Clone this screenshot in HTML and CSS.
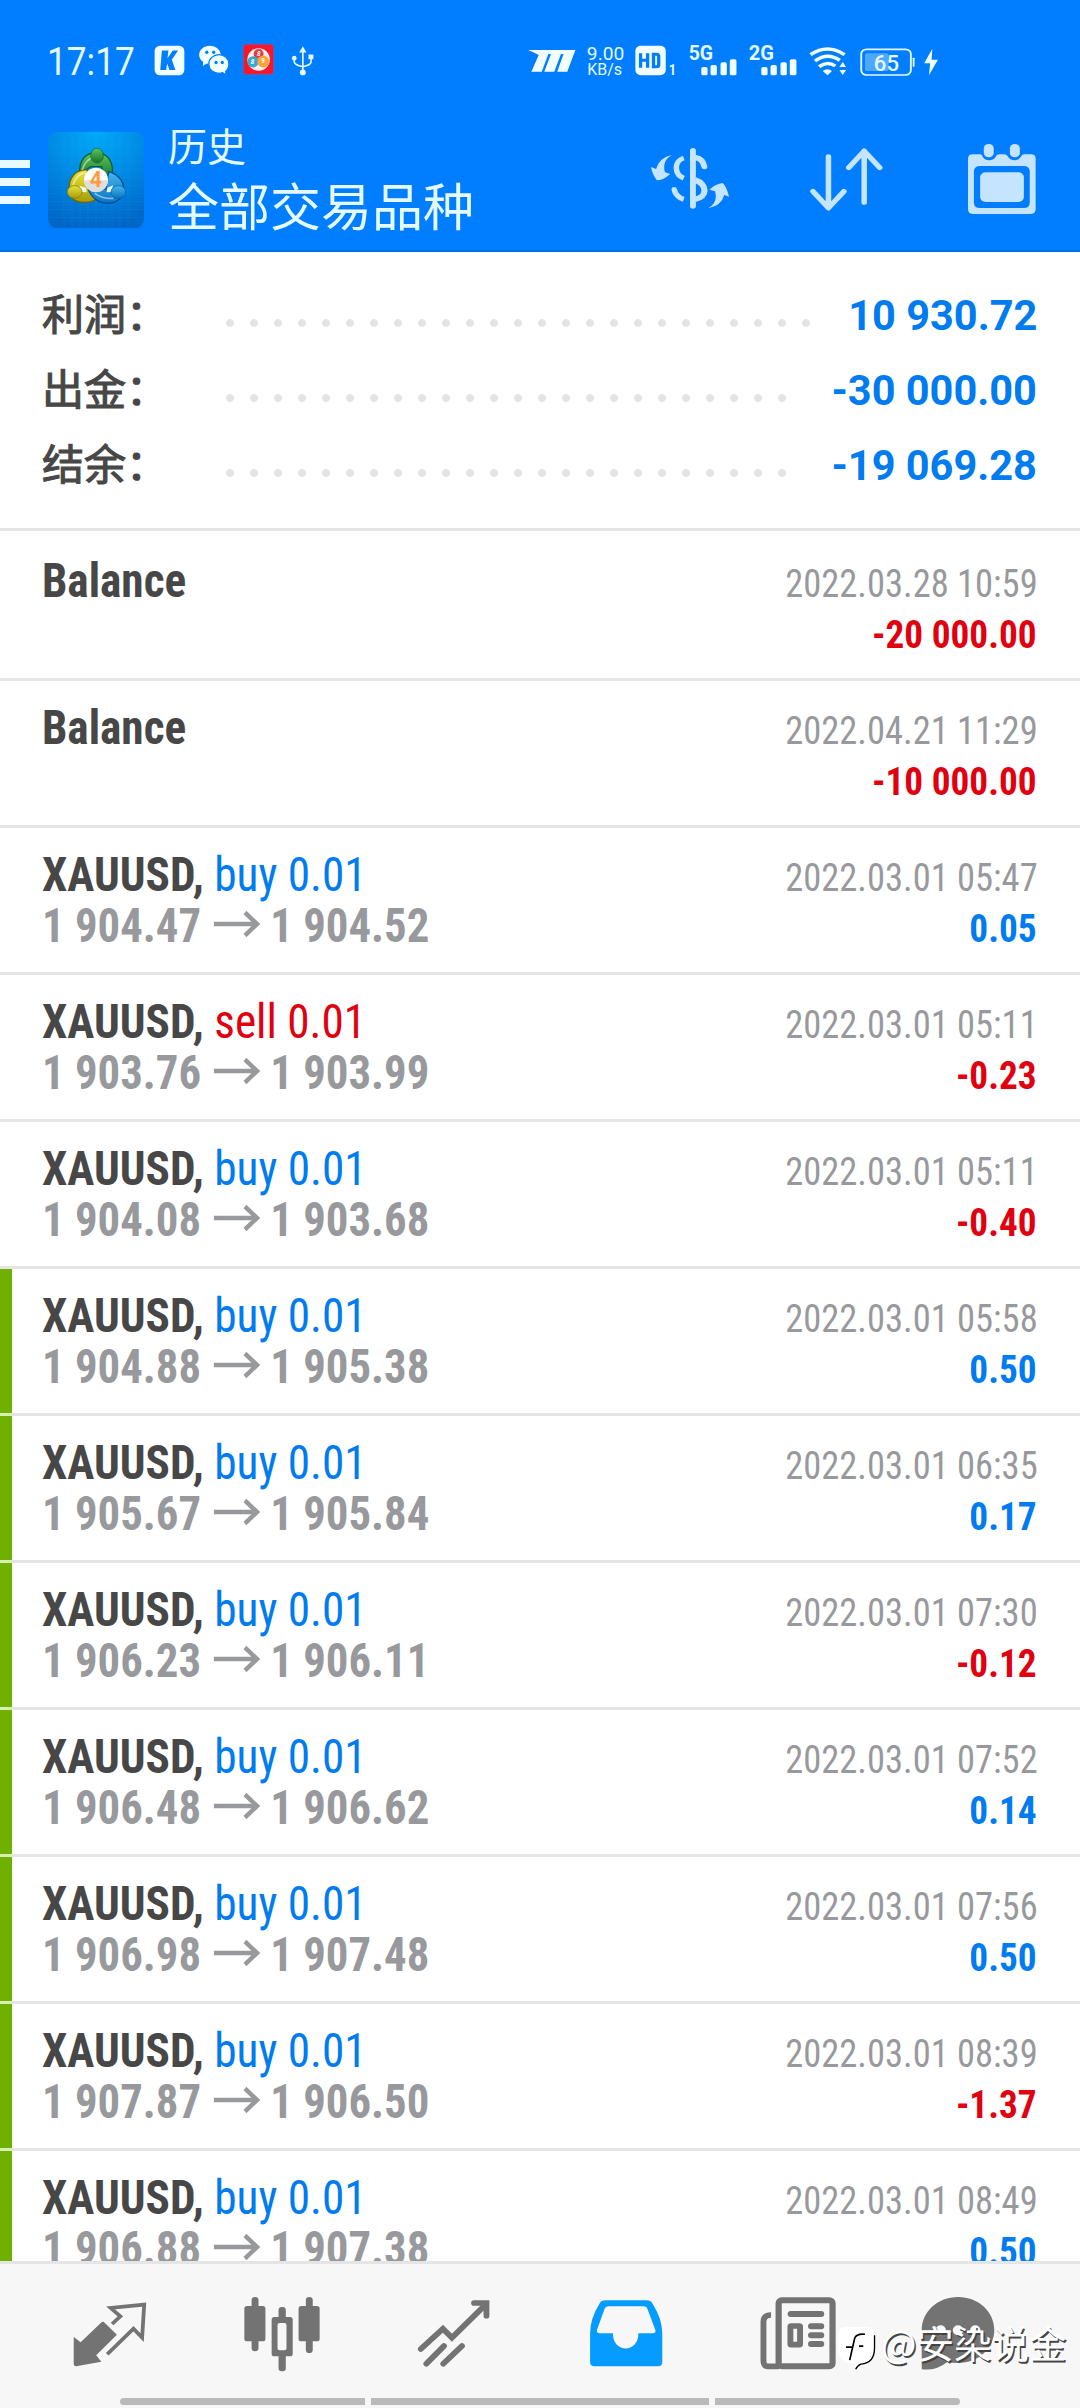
FILE: index.html
```html
<!DOCTYPE html>
<html lang="zh-CN">
<head>
<meta charset="utf-8">
<title>历史</title>
<link rel="stylesheet" href="styles.css">
</head>
<body>
<header class="header">
  <div class="status">
    <span class="clock">17:17</span>
    <svg class="status-left" viewBox="42 25 490 103">
      <!-- K app -->
      <rect x="42" y="33" width="90" height="90" rx="16" fill="#f2ffff"/>
      <path d="M64 48H84L81 71L97 48H113L94 76L105 107H87L80 87L77 107H59Z" fill="#007eff"/>
      <!-- chat bubbles -->
      <path d="M209 33c-18 0-32 12-32 28 0 9 5 16 12 21l-1 13 12-8c3 1 6 1 9 1 18 0 33-12 33-27 0-16-15-28-33-28z" fill="#f2ffff"/>
      <path d="M237 60c-17 0-31 13-31 29s14 28 31 28c4 0 8-1 11-2l11 8-2-12c6-5 10-13 10-22 0-16-13-29-30-29z" fill="#f2ffff" stroke="#007eff" stroke-width="4"/>
      <g fill="#007eff"><circle cx="200" cy="53" r="5"/><circle cx="221" cy="53" r="5"/><circle cx="228" cy="84" r="5"/><circle cx="247" cy="84" r="5"/></g>
      <!-- lottery balls -->
      <rect x="311" y="29" width="91" height="91" rx="9" fill="#f5182b" stroke="#8655a4" stroke-width="2"/>
      <circle cx="357" cy="75" r="34" fill="#fff2ee"/>
      <circle cx="357" cy="58" r="15" fill="#e73a42"/>
      <circle cx="340" cy="82" r="17" fill="#37a9cf"/>
      <circle cx="371" cy="81" r="18" fill="#ffa43a"/>
      <g class="ball"><text x="352" y="64">8</text><text x="333" y="90">8</text><text x="365" y="87">9</text></g>
      <!-- usb -->
      <g fill="none" stroke="#e4faff" stroke-width="5"><path d="M491 50V112M465 74V82Q465 92 491 97M516 72V82Q516 92 491 97"/></g>
      <g fill="#e4faff"><path d="M491 35L502 54H480Z"/><circle cx="491" cy="114" r="9"/><circle cx="465" cy="71" r="7"/><rect x="508" y="60" width="15" height="14"/></g>
    </svg>
    <svg class="status-right" viewBox="78 70 1110 102" preserveAspectRatio="none">
      <path d="M78 91H206L184 156H157L174 103H167L149 156H122L140 103H133L115 156H87L107 106Q94 98 78 91Z" fill="#f2ffff"/>
      <g class="st"><text x="237" y="121" font-size="56" textLength="101" lengthAdjust="spacingAndGlyphs">9.00</text><text x="238" y="166" font-size="47" textLength="94" lengthAdjust="spacingAndGlyphs">KB/s</text></g>
      <rect x="368" y="78" width="82" height="89" rx="15" fill="#f2ffff"/>
      <path d="M382 101V144M401 101V144M382 122H401M417 104H425Q431 104 431 110V135Q431 141 425 141H417Z" fill="none" stroke="#007eff" stroke-width="9"/>
      <g class="st bold"><text x="458" y="165" font-size="45" textLength="20" lengthAdjust="spacingAndGlyphs">1</text><text x="512" y="122" font-size="58" textLength="66" lengthAdjust="spacingAndGlyphs">5G</text><text x="674" y="122" font-size="58" textLength="68" lengthAdjust="spacingAndGlyphs">2G</text></g>
      <g fill="#f2ffff">
        <rect x="546" y="142" width="17" height="25" rx="5"/><rect x="571" y="136" width="17" height="31" rx="5"/><rect x="598" y="128" width="17" height="39" rx="5"/><rect x="623" y="119" width="18" height="48" rx="5"/>
        <rect x="708" y="142" width="17" height="25" rx="5"/><rect x="733" y="136" width="17" height="31" rx="5"/><rect x="760" y="128" width="17" height="39" rx="5"/><rect x="785" y="119" width="18" height="48" rx="5"/>
        <path d="M874 154Q886 144 899 154L887 167ZM928 127L937 142H919ZM928 166L937 151H919Z"/>
      </g>
      <path d="M841 105Q887 71 933 105M853 124Q887 96 920 122M864 141Q887 123 908 139" fill="none" stroke="#f2ffff" stroke-width="10"/>
      <rect x="978" y="89" width="134" height="77" rx="14" fill="none" stroke="#e4faff" stroke-width="5"/>
      <rect x="988" y="101" width="64" height="53" rx="5" fill="#4fa8ff"/>
      <rect x="1117" y="114" width="5" height="27" rx="2" fill="#e4faff"/>
      <g class="st medium"><text x="1012" y="153" font-size="64" textLength="68" lengthAdjust="spacingAndGlyphs">65</text></g>
      <path d="M1170 87L1148 131H1164L1161 167L1185 120H1168Z" fill="#f2ffff"/>
    </svg>
  </div>
  <div class="appbar">
    <div class="menu"><i></i><i></i><i></i></div>
    <svg class="logo" viewBox="24 36 288 288">
      <defs>
        <radialGradient id="bg" cx="50%" cy="0" r="100%"><stop offset="0" stop-color="#00aaf8"/><stop offset=".5" stop-color="#008ae4"/><stop offset="1" stop-color="#0067c8"/></radialGradient>
        <linearGradient id="g" x1="0" y1="0" x2="0" y2="1"><stop offset="0" stop-color="#5fc45c"/><stop offset="1" stop-color="#13742a"/></linearGradient>
        <linearGradient id="y" x1="0" y1="0" x2="0" y2="1"><stop offset="0" stop-color="#e8e53a"/><stop offset="1" stop-color="#a99a09"/></linearGradient>
        <linearGradient id="b" x1="0" y1="0" x2="0" y2="1"><stop offset="0" stop-color="#43b7ea"/><stop offset="1" stop-color="#0a74c4"/></linearGradient>
      </defs>
      <rect x="24" y="36" width="288" height="288" rx="26" fill="url(#bg)"/>
      <path d="M72 36V324M96 36V324M120 36V324M144 36V324M168 36V324M192 36V324M216 36V324M240 36V324M264 36V324M24 76H312M24 100H312M24 124H312M24 148H312M24 172H312M24 196H312M24 220H312M24 244H312M24 268H312M24 292H312" stroke="#56c8ff" stroke-opacity=".16" stroke-width="1.5"/>
      <path d="M119 162C116 118 139 98 169 98S222 122 217 165L200 180L184 140H152Z" fill="url(#g)" stroke="#0c5a35" stroke-width="4"/>
      <path d="M88 213C83 170 112 147 142 150L145 207L174 234C153 252 112 251 95 234Z" fill="url(#y)" stroke="#6d6800" stroke-width="4"/>
      <path d="M206 155C238 164 257 190 250 222C237 249 204 256 177 244Q156 235 146 211L198 207Z" fill="url(#b)" stroke="#044f96" stroke-width="4"/>
      <path d="M126 150Q138 116 165 110M99 196Q108 164 135 158M164 220Q190 238 220 235" fill="none" stroke="#fff" stroke-opacity=".5" stroke-width="5"/>
      <path d="M118 197L138 203L140 217L126 216ZM202 203L219 196L215 216L200 217Z" fill="#eaf8e6"/>
      <ellipse cx="171" cy="107" rx="19" ry="22" fill="url(#g)" stroke="#0d6430" stroke-width="2"/>
      <ellipse cx="104" cy="216" rx="22" ry="19" fill="url(#y)" stroke="#857c05" stroke-width="2"/>
      <ellipse cx="235" cy="216" rx="22" ry="19" fill="url(#b)" stroke="#075fa9" stroke-width="2"/>
      <circle cx="168" cy="179" r="36" fill="#fff"/>
      <path d="M132 181H204A36 36 0 0 1 132 181Z" fill="#dedede"/>
      <text class="four" x="149" y="202">4</text>
    </svg>
    <div class="titles"><div class="title">历史</div><div class="subtitle">全部交易品种</div></div>
    <div class="actions">
      <svg class="act-money" viewBox="408 383 212 183" preserveAspectRatio="none">
        <path d="M522 391V557M530 412Q549 416 553 439" fill="none" stroke="#c4e4ff" stroke-width="16" stroke-linecap="round"/>
        <path d="M497 413C470 422 470 462 497 474" fill="none" stroke="#c4e4ff" stroke-width="15"/>
        <path d="M471 508Q476 530 497 537" fill="none" stroke="#c4e4ff" stroke-width="15"/>
        <circle cx="471" cy="507" r="7" fill="#c4e4ff"/>
        <path d="M528 479C562 492 562 530 528 537" fill="none" stroke="#c4e4ff" stroke-width="17"/>
        <path d="M465 404Q437 421 446 456L460 461Q442 480 424 480Q412 464 408 440L422 446Q430 412 465 404Z" fill="#c4e4ff"/>
        <path d="M563 564Q591 547 582 513L567 508Q584 490 603 488Q614 500 620 529L607 524Q600 556 563 564Z" fill="#c4e4ff"/>
      </svg>
      <svg class="act-sort" viewBox="837 383 198 190" preserveAspectRatio="none">
        <path d="M887 409V564M845 514L887 564L929 514M984 547V392M942 442L984 392L1026 442" fill="none" stroke="#c4e4ff" stroke-width="15" stroke-linecap="round" stroke-linejoin="round"/>
      </svg>
      <svg class="act-cal" viewBox="1265 371 185 211" preserveAspectRatio="none">
        <path fill-rule="evenodd" d="M1278 402H1296Q1304 402 1304 408Q1310 420 1322 420Q1336 420 1341 408Q1343 402 1350 402H1363Q1370 402 1373 408Q1379 420 1392 420Q1404 420 1410 408Q1411 402 1418 402H1436Q1449 402 1449 415V568Q1449 582 1436 582H1278Q1265 582 1265 568V415Q1265 402 1278 402ZM1298 437Q1281 437 1281 454V547Q1281 564 1298 564H1416Q1433 564 1433 547V454Q1433 437 1416 437Z" fill="#c4e4ff"/>
        <rect x="1298" y="456" width="119" height="90" rx="15" fill="#c4e4ff"/>
        <rect x="1308" y="371" width="27" height="40" rx="13" fill="#c4e4ff"/><rect x="1379" y="371" width="27" height="40" rx="13" fill="#c4e4ff"/>
      </svg>
    </div>
  </div>
</header>

<section class="summary">
  <div class="sum"><span class="label">利润：</span><span class="dots"></span><b>10 930.72</b></div>
  <div class="sum"><span class="label">出金：</span><span class="dots short"></span><b>-30 000.00</b></div>
  <div class="sum"><span class="label">结余：</span><span class="dots short"></span><b>-19 069.28</b></div>
</section>

<svg class="defs"><symbol id="arrow" viewBox="0 0 50 28"><path d="M0 14H46M33.500 2.500L46.500 14L33.500 25.500" fill="none" stroke="#98999c" stroke-width="4.600"/></symbol></svg>

<main class="list">
  <div class="row first"><div class="left"><div class="name">Balance</div></div><div class="right"><div class="date">2022.03.28 10:59</div><div class="value neg">-20 000.00</div></div></div>
  <div class="row"><div class="left"><div class="name">Balance</div></div><div class="right"><div class="date">2022.04.21 11:29</div><div class="value neg">-10 000.00</div></div></div>
  <div class="row"><div class="left"><div class="name">XAUUSD, <span class="buy">buy 0.01</span></div><div class="price">1 904.47<svg class="arrow"><use href="#arrow"/></svg>1 904.52</div></div><div class="right"><div class="date">2022.03.01 05:47</div><div class="value">0.05</div></div></div>
  <div class="row"><div class="left"><div class="name">XAUUSD, <span class="sell">sell 0.01</span></div><div class="price">1 903.76<svg class="arrow"><use href="#arrow"/></svg>1 903.99</div></div><div class="right"><div class="date">2022.03.01 05:11</div><div class="value neg">-0.23</div></div></div>
  <div class="row"><div class="left"><div class="name">XAUUSD, <span class="buy">buy 0.01</span></div><div class="price">1 904.08<svg class="arrow"><use href="#arrow"/></svg>1 903.68</div></div><div class="right"><div class="date">2022.03.01 05:11</div><div class="value neg">-0.40</div></div></div>
  <div class="row marked"><div class="left"><div class="name">XAUUSD, <span class="buy">buy 0.01</span></div><div class="price">1 904.88<svg class="arrow"><use href="#arrow"/></svg>1 905.38</div></div><div class="right"><div class="date">2022.03.01 05:58</div><div class="value">0.50</div></div></div>
  <div class="row marked"><div class="left"><div class="name">XAUUSD, <span class="buy">buy 0.01</span></div><div class="price">1 905.67<svg class="arrow"><use href="#arrow"/></svg>1 905.84</div></div><div class="right"><div class="date">2022.03.01 06:35</div><div class="value">0.17</div></div></div>
  <div class="row marked"><div class="left"><div class="name">XAUUSD, <span class="buy">buy 0.01</span></div><div class="price">1 906.23<svg class="arrow"><use href="#arrow"/></svg>1 906.11</div></div><div class="right"><div class="date">2022.03.01 07:30</div><div class="value neg">-0.12</div></div></div>
  <div class="row marked"><div class="left"><div class="name">XAUUSD, <span class="buy">buy 0.01</span></div><div class="price">1 906.48<svg class="arrow"><use href="#arrow"/></svg>1 906.62</div></div><div class="right"><div class="date">2022.03.01 07:52</div><div class="value">0.14</div></div></div>
  <div class="row marked"><div class="left"><div class="name">XAUUSD, <span class="buy">buy 0.01</span></div><div class="price">1 906.98<svg class="arrow"><use href="#arrow"/></svg>1 907.48</div></div><div class="right"><div class="date">2022.03.01 07:56</div><div class="value">0.50</div></div></div>
  <div class="row marked"><div class="left"><div class="name">XAUUSD, <span class="buy">buy 0.01</span></div><div class="price">1 907.87<svg class="arrow"><use href="#arrow"/></svg>1 906.50</div></div><div class="right"><div class="date">2022.03.01 08:39</div><div class="value neg">-1.37</div></div></div>
  <div class="row marked"><div class="left"><div class="name">XAUUSD, <span class="buy">buy 0.01</span></div><div class="price">1 906.88<svg class="arrow"><use href="#arrow"/></svg>1 907.38</div></div><div class="right"><div class="date">2022.03.01 08:49</div><div class="value">0.50</div></div></div>
</main>

<footer class="footer">
  <nav class="tabs">
    <svg viewBox="210 470 220 225" preserveAspectRatio="none">
      <path d="M300 543L340 583L280 645L295 664L222 678Q215 678 215 671V590L235 606L294 547Q300 541 304 547Z" fill="#737373"/>
      <path d="M326 551L350 528L322 503L419 493L413 592L388 565L312 642" fill="none" stroke="#737373" stroke-width="11"/>
    </svg>
    <svg viewBox="707 470 220 225" preserveAspectRatio="none">
      <g fill="#737373"><rect x="708" y="497" width="61" height="106" rx="8"/><rect x="729" y="470" width="20" height="163" rx="10"/><rect x="865" y="497" width="61" height="106" rx="8"/><rect x="886" y="470" width="20" height="168" rx="10"/><rect x="807" y="500" width="21" height="50" rx="10"/><rect x="807" y="630" width="21" height="63" rx="9"/><path fill="#f7f7f7" d="M800 540H836V640H800Z"/><path fill-rule="evenodd" d="M795 530H840Q848 530 848 538V640Q848 648 840 648H795Q787 648 787 640V538Q787 530 795 530ZM810 548Q804 548 804 554V624Q804 630 810 630H824Q830 630 830 624V554Q830 548 824 548Z"/></g>
    </svg>
    <svg viewBox="1207 470 220 225" preserveAspectRatio="none">
      <path d="M1221 626L1285 565L1311 592L1408 493M1375 488H1411V526M1237 670L1288 617M1286 670L1340 617" fill="none" stroke="#737373" stroke-width="17" stroke-linecap="round"/>
    </svg>
    <svg viewBox="141 470 220 225" preserveAspectRatio="none">
      <path fill-rule="evenodd" d="M190 480H310Q322 480 328 490Q356 535 356 580V665Q356 678 343 678H160Q147 678 147 665V580Q147 535 174 490Q180 480 190 480ZM201 498Q192 498 188 508L167 569Q166 579 175 579H213C213 640 287 640 287 579H328Q338 579 336 569L314 508Q311 498 301 498Z" fill="#069cff"/>
    </svg>
    <svg viewBox="645 470 220 225" preserveAspectRatio="none">
      <g fill="none" stroke="#737373"><rect x="699" y="480" width="156" height="198" rx="9" stroke-width="18"/><path d="M677 524Q655 524 655 545V660Q655 678 668 678H700" stroke-width="17"/><path d="M734 521H822M793 558H822M793 585H822M793 611H822" stroke-width="18" stroke-linecap="round"/><rect x="733" y="557" width="28" height="56" rx="2" stroke-width="17"/></g>
    </svg>
    <svg class="chat" viewBox="1103 470 220 225" preserveAspectRatio="none">
      <path d="M1213 470C1272 470 1318 514 1318 569S1272 668 1213 668Q1196 668 1183 664Q1150 692 1108 687V569C1108 514 1155 470 1213 470Z" fill="#737373"/>
      <g fill="#f7f7f7"><circle cx="1163" cy="570" r="15"/><circle cx="1213" cy="570" r="15"/><circle cx="1263" cy="570" r="15"/></g>
    </svg>
  </nav>
  <div class="gesture"><i></i><i></i><i></i></div>
  <div class="watermark">
    <svg viewBox="52 112 120 136"><path d="M78 115H150Q168 117 168 137V178Q168 225 127 227Q117 230 111 245L108 226Q58 226 58 181V145Q58 118 78 115Z" fill="#fff"/><path d="M168 140V178Q168 225 127 227Q117 230 111 243" fill="none" stroke="#000" stroke-width="4"/><path d="M139 137Q114 134 108 149L93 215M82 176H101M121 173H134" fill="none" stroke="#000" stroke-width="5"/></svg>
    <span>@安染说金</span>
  </div>
</footer>
</body>
</html>
```
FILE: styles.css
```css
* { box-sizing: border-box; }

body {
  margin: 0;
  width: 1080px;
  height: 2408px;
  overflow: hidden;
  display: flex;
  flex-direction: column;
  background: #fff;
  font-family: Roboto, "Noto Sans CJK SC", sans-serif;
}

svg { display: block; flex: none; }
.defs { width: 0; height: 0; }

/* Header */
.header {
  height: 252px;
  flex: none;
  background: #007eff;
  border-bottom: 2px solid #0071e0;
  display: flex;
  flex-direction: column;
}
.status { height: 120px; padding-top: 43px; display: flex; align-items: flex-start; }
.clock {
  width: 107px;
  margin-left: 47px;
  font-size: 38px;
  line-height: 38px;
  color: #e4faff;
  transform: scaleX(.927);
  transform-origin: left;
}
.status-left { width: 163px; height: 34px; }
.status-right { width: 411px; height: 34px; margin-left: 211px; overflow: visible; }
.st { font-family: Roboto, sans-serif; fill: #e4faff; }
.st.medium { font-weight: 500; }
.st.bold { font-weight: 700; }
.ball { font: italic 700 19px Roboto, sans-serif; fill: #fff; }

.appbar { flex: 1; display: flex; align-items: flex-start; }
.menu { width: 30px; margin: 40px 18px 0 0; display: flex; flex-direction: column; gap: 10px; }
.menu i { height: 8px; background: #e9faff; }
.logo { width: 96px; height: 96px; margin-top: 12px; }
.four { font: 700 64px Roboto, sans-serif; fill: #ff9a3d; }
.titles { width: 482px; padding-left: 24px; color: #e4faff; font-family: "Noto Sans CJK SC", sans-serif; }
.title { font-size: 39px; line-height: 48px; }
.subtitle { font-size: 51px; line-height: 60px; margin-top: 6px; }
.actions { display: flex; align-items: flex-start; padding: 24px 0 0 25px; }
.act-money { width: 78px; height: 61px; margin-top: 4px; }
.act-sort { width: 73px; height: 63px; margin: 4px 0 0 81px; }
.act-cal { width: 68px; height: 70px; margin-left: 85px; }

/* Summary */
.summary { height: 279px; flex: none; padding: 22px 42px 0; border-bottom: 3px solid #e5e5e5; }
.sum { height: 75px; display: flex; align-items: baseline; line-height: 75px; }
.label { width: 176px; font: 400 42px/75px "Noto Sans CJK SC", sans-serif; color: #474747; -webkit-text-stroke: 1.1px #474747; }
.dots {
  width: 600px;
  height: 11px;
  background: radial-gradient(circle at 12px 4px, #e4e4e4 3.600px, transparent 4.200px) 0 0 / 24px 11px repeat-x;
}
.dots.short { width: 576px; }
.sum b { margin-left: auto; margin-right: 1px; font-size: 42px; color: #007bf0; transform: scaleX(.988); transform-origin: right; }

/* Deals */
.list { height: 1730px; flex: none; overflow: hidden; }
.row {
  height: 147px;
  padding: 21px 42px 0;
  display: flex;
  justify-content: space-between;
  background: linear-gradient(#e5e5e5, #e5e5e5) 0 100% / 100% 3px no-repeat;
  white-space: nowrap;
  line-height: 51px;
  font-stretch: 75%;
}
.row.first { height: 150px; padding-top: 24px; }
.row.marked {
  background:
    linear-gradient(#d8efb0, #d8efb0) 0 100% / 12px 3px no-repeat,
    linear-gradient(#e5e5e5, #e5e5e5) 0 100% / 100% 3px no-repeat,
    linear-gradient(#6fb100, #6fb100) 0 0 / 12px 100% no-repeat;
}
.left { font-size: 48px; font-weight: 700; }
.name { color: #474747; transform: scaleX(.942); transform-origin: left; }
.name span { font-weight: 400; }
.buy, .value { color: #007bf0; }
.sell, .value.neg { color: #e0000f; }
.price { display: flex; align-items: center; color: #98999c; transform: scaleX(.933); transform-origin: left; }
.arrow { width: 50px; height: 28px; margin: 0 11px 4px 13px; }
.right { padding-top: 4px; font-size: 39px; text-align: right; }
.date { color: #98999c; transform: scaleX(.936); transform-origin: right; }
.value { font-weight: 700; margin-right: 1px; transform: scaleX(.955); transform-origin: right; }

/* Footer */
.footer { position: relative; flex: 1; background: #f7f7f7; border-top: 3px solid #e5e5e5; display: flex; flex-direction: column; }
.tabs { height: 134px; padding: 33px 0 0 72px; display: flex; gap: 96px; }
.tabs svg { width: 76px; height: 75px; }
.tabs .chat { margin-left: -12px; }
.gesture { display: flex; gap: 6px; padding-left: 120px; }
.gesture i { width: 245px; height: 7px; background: #bababa; }
.gesture i:nth-child(2) { width: 338px; }
.gesture i:first-child { border-radius: 4px 0 0 4px; }
.gesture i:last-child { border-radius: 0 4px 4px 0; }
.watermark { position: absolute; left: 836px; top: 53px; display: flex; align-items: flex-start; }
.watermark svg { width: 40px; height: 45px; margin-top: 9px; }
.watermark span {
  margin-left: 5px;
  font: 400 37.500px/50px "Noto Sans CJK SC", sans-serif;
  color: #fff;
  text-shadow: 1.500px 1.500px 0 #444;
}
```
